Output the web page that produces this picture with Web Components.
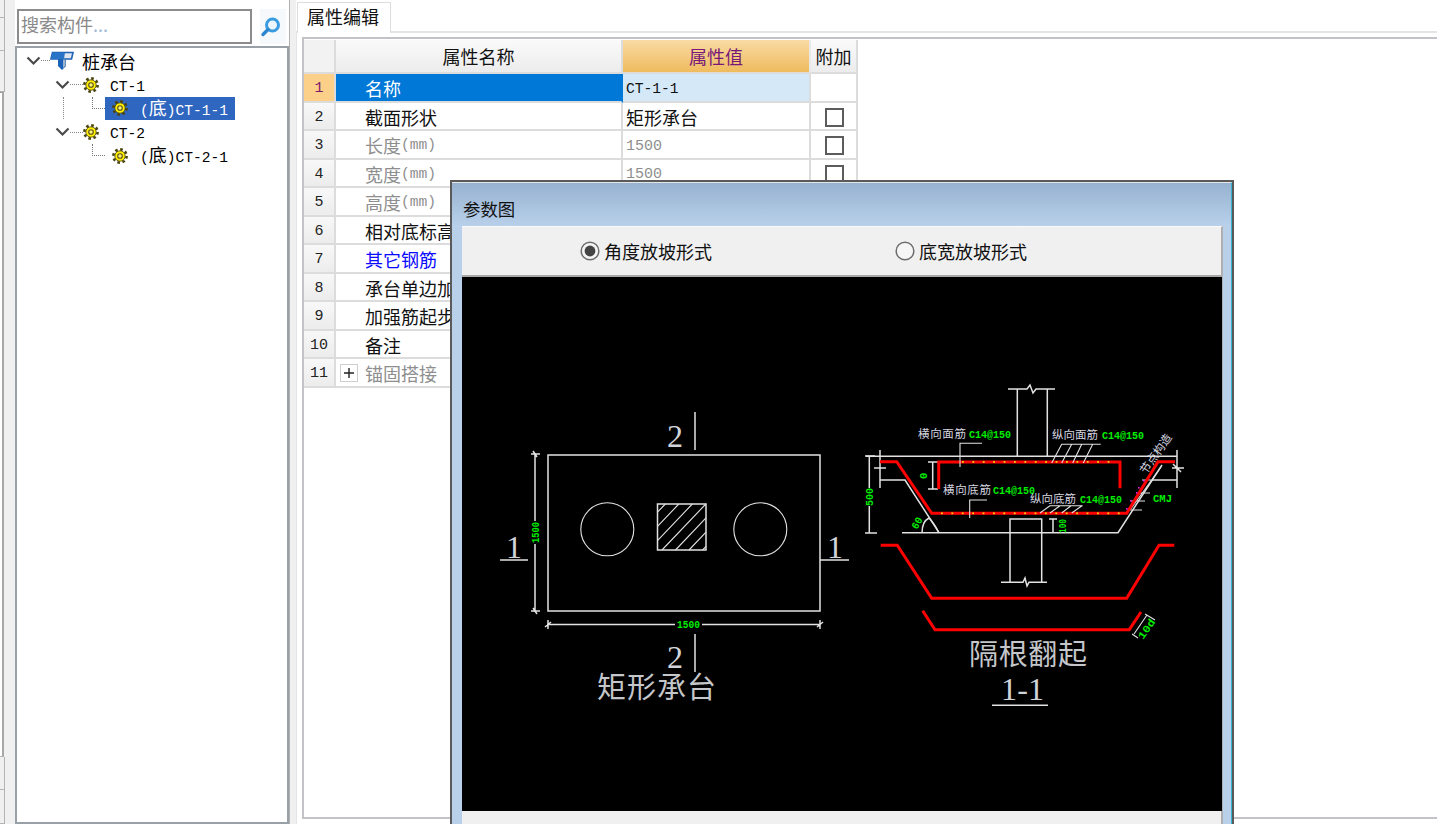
<!DOCTYPE html>
<html lang="zh">
<head>
<meta charset="utf-8">
<title>属性编辑</title>
<style>
  html, body { margin: 0; padding: 0; height: 100%; overflow: hidden; background: #f0f0f0; }
  body { font-family: "Noto Sans CJK SC", sans-serif; font-size: 18px; color: #000; }
</style>
</head>
<body>
<gt-app>
  <gt-rail slot="rail"></gt-rail>
  <gt-tree-panel slot="tree" placeholder="搜索构件...">
    <gt-tree-row level="0" icon="pile" label="桩承台"></gt-tree-row>
    <gt-tree-row level="1" icon="gear" label="CT-1"></gt-tree-row>
    <gt-tree-row level="2" icon="gear" label="(底)CT-1-1" selected guide></gt-tree-row>
    <gt-tree-row level="1" icon="gear" label="CT-2"></gt-tree-row>
    <gt-tree-row level="2" icon="gear" label="(底)CT-2-1"></gt-tree-row>
  </gt-tree-panel>
  <gt-prop-panel slot="props" tab="属性编辑"></gt-prop-panel>
  <gt-param-dialog slot="dialog" caption="参数图">
    <gt-radio checked label="角度放坡形式" slot="options"></gt-radio>
    <gt-radio label="底宽放坡形式" slot="options"></gt-radio>
    <gt-cad-drawing></gt-cad-drawing>
  </gt-param-dialog>
</gt-app>

<script>
const CJK = '"Noto Sans CJK SC", sans-serif';
const MONO = '"Liberation Mono", monospace';

// latin runs are narrower than the cjk ones, like the old simsun look
const mixed = (text) => text.replace(/[\x20-\x7e]+/g, (m) => `<span class="l">${m}</span>`);

const GEAR = `<svg width="16" height="16" viewBox="0 0 16 16">
  <circle cx="8" cy="8" r="6.6" fill="none" stroke="#4a4410" stroke-width="2.6" stroke-dasharray="2.6 2.58"/>
  <circle cx="8" cy="8" r="5.2" fill="#ffee00" stroke="#4a4410" stroke-width="0.8"/>
  <circle cx="8" cy="8" r="2.3" fill="#fff27a" stroke="#5a5418" stroke-width="1.1"/>
</svg>`;

const PILE = `<svg width="24" height="20" viewBox="0 0 24 20">
  <path d="M2.5 1.5 H23 L21.5 8 H1 Z" fill="#dfe6ee" stroke="#1c62b8" stroke-width="1.6"/>
  <path d="M2.5 1.5 H15 L14 8 H1 Z" fill="#2a74c8"/>
  <path d="M8 8 H16 V15 L12 19 L8 15 Z" fill="#1c62b8"/>
  <path d="M13 8.5 H15.5 V14.5 L13 17 Z" fill="#9db4cc"/>
</svg>`;

class GtApp extends HTMLElement {
  constructor() {
    super();
    this.attachShadow({ mode: 'open' }).innerHTML = `
      <style>
        :host {
          display: flex;
          position: relative;
          width: 1437px;
          height: 824px;
          overflow: hidden;
          background: #f0f0f0;
        }
        .gap { width: 10px; flex: none; }
        .gap2 { width: 6px; flex: none; }
      </style>
      <slot name="rail"></slot>
      <div class="gap"></div>
      <slot name="tree"></slot>
      <div class="gap2"></div>
      <slot name="props"></slot>
      <slot name="dialog"></slot>`;
  }
}

class GtRail extends HTMLElement {
  constructor() {
    super();
    this.attachShadow({ mode: 'open' }).innerHTML = `
      <style>
        :host { display: flex; flex-direction: column; width: 5px; flex: none; }
        div { box-sizing: border-box; border-right: 1px solid #b4b4b4; border-bottom: 1px solid #b4b4b4; background: #f0f0f0; }
        .w { flex: 1; background: #fff; width: 4px; border-right: 2px solid #a8a8a8; border-top: 1px solid #999; }
      </style>
      <div style="height:18px"></div>
      <div style="height:33px"></div>
      <div style="height:41px"></div>
      <div class="w"></div>
      <div style="height:33px"></div>
      <div style="height:34px"></div>`;
  }
}

class GtTreePanel extends HTMLElement {
  connectedCallback() {
    if (this.shadowRoot) return;
    this.attachShadow({ mode: 'open' }).innerHTML = `
      <style>
        :host {
          display: flex;
          flex-direction: column;
          width: 275px;
          flex: none;
          box-sizing: border-box;
          background: #fff;
          border-right: 1px solid #b0b0b0;
          font-family: ${CJK};
        }
        .search { display: flex; height: 46px; box-sizing: border-box; padding: 9px 4px 2px 2px; gap: 8px; }
        .input {
          flex: none;
          width: 235px;
          box-sizing: border-box;
          border: 2px solid #8c8c8c;
          padding-left: 2px;
          line-height: 26px;
          color: #8a8a8a;
          font-size: 18px;
          background: #fff;
        }
        .input b { font-weight: 400; color: #9db8d8; }
        .btn { flex: 1; display: flex; align-items: center; justify-content: center; background: #f6f9fc; padding-right: 4px; }
        .tree {
          flex: 1;
          box-sizing: border-box;
          border: 2px solid #9aa0a8;
          background: #fff;
          padding-top: 1px;
        }
      </style>
      <div class="search">
        <div class="input">搜索构件<b>...</b></div>
        <div class="btn">
          <svg width="22" height="22" viewBox="0 0 22 22">
            <circle cx="12.5" cy="9" r="6" fill="#eaf5fd" stroke="#3a9be0" stroke-width="3"/>
            <path d="M8 13.5 L3 18.5" stroke="#2f86d0" stroke-width="3.4" stroke-linecap="round"/>
          </svg>
        </div>
      </div>
      <div class="tree"><slot></slot></div>`;
  }
}

class GtTreeRow extends HTMLElement {
  connectedCallback() {
    if (this.shadowRoot) return;
    const level = +this.getAttribute('level');
    const icon = this.getAttribute('icon') === 'pile' ? PILE : GEAR;
    const label = mixed(this.getAttribute('label'));
    const chevron = `<svg class="chev" width="15" height="10" viewBox="0 0 15 10"><path d="M1.5 1.5 L7.5 7.5 L13.5 1.5" fill="none" stroke="#4a4a4a" stroke-width="2.2"/></svg>`;
    const lead = level < 2
      ? `${chevron}<i class="dots"></i>`
      : `<i class="elbow"></i>`;
    this.attachShadow({ mode: 'open' }).innerHTML = `
      <style>
        :host {
          display: flex;
          position: relative;
          align-items: center;
          height: 23.8px;
          white-space: nowrap;
          font-family: ${CJK};
          font-size: 18px;
          line-height: 24px;
        }
        :host([level="0"]) { padding-left: 9px; }
        :host([level="1"]) { padding-left: 38px; }
        :host([level="2"]) { padding-left: 75px; }
        :host([guide])::before {
          content: "";
          position: absolute;
          left: 46px;
          top: 0;
          height: 22px;
          border-left: 1px dotted #888;
        }
        .l { font-family: ${MONO}; font-size: 14.6px; }
        .chev { flex: none; }
        .dots { flex: none; width: 13px; border-top: 1px dotted #888; }
        :host([level="0"]) .dots { width: 9px; }
        .elbow {
          flex: none;
          align-self: flex-start;
          width: 13px;
          height: 12px;
          border-left: 1px dotted #777;
          border-bottom: 1px dotted #777;
          box-sizing: border-box;
        }
        .item { display: flex; align-items: center; height: 100%; }
        :host([level="0"]) .item { gap: 8px; }
        :host([level="1"]) .item { gap: 11px; }
        :host([level="2"]) .item { gap: 12px; padding: 0 7px; }
        :host([selected]) .item { background: #2f66c0; color: #fff; }
        svg { display: block; }
      </style>
      ${lead}<div class="item">${icon}<span>${label}</span></div>`;
  }
}

const ROWS = [
  { name: '名称', value: 'CT-1-1', nocheck: true, selected: true },
  { name: '截面形状', value: '矩形承台' },
  { name: '长度(mm)', value: '1500', muted: true },
  { name: '宽度(mm)', value: '1500', muted: true },
  { name: '高度(mm)', muted: true },
  { name: '相对底标高' },
  { name: '其它钢筋', link: true },
  { name: '承台单边加' },
  { name: '加强筋起步' },
  { name: '备注' },
  { name: '锚固搭接', muted: true, expand: true, nocheck: true },
];

class GtPropPanel extends HTMLElement {
  connectedCallback() {
    if (this.shadowRoot) return;
    const rows = ROWS.map((row, i) => `
      <div class="cell num ${row.selected ? 'cur' : ''}">${i + 1}</div>
      <div class="cell name ${row.selected ? 'sel' : ''} ${row.muted ? 'muted' : ''} ${row.link ? 'link' : ''}">
        ${row.expand ? '<span class="plus"><svg width="12" height="12" viewBox="0 0 12 12"><path d="M1 6 H11 M6 1 V11" stroke="#222" stroke-width="1.4"/></svg></span>' : ''}
        ${mixed(row.name)}
      </div>
      <div class="cell value ${row.selected ? 'active' : ''} ${row.muted ? 'muted num-v' : ''}">${row.value ? mixed(row.value) : ''}</div>
      <div class="cell extra">${row.nocheck ? '' : '<span class="box"></span>'}</div>`).join('');
    this.attachShadow({ mode: 'open' }).innerHTML = `
      <style>
        :host {
          display: flex;
          flex-direction: column;
          flex: 1;
          min-width: 0;
          font-family: ${CJK};
          font-size: 18px;
          background: #fff;
        }
        .tabs { display: flex; height: 33px; box-sizing: border-box; border-bottom: 2px solid #e4e4e4; background: #fff; flex: none; padding-left: 1px; }
        .tab {
          width: 94px;
          margin-top: 2px;
          margin-bottom: -2px;
          box-sizing: border-box;
          border: 1px solid #dcdcdc;
          border-bottom: 0;
          background: #fff;
          text-align: center;
          line-height: 27px;
          color: #111;
          padding-right: 2px;
        }
        .body { flex: 1; display: flex; min-height: 0; padding: 4px 0 5px 5px; border-left: 1px solid #e4e4e4; }
        .frame { flex: 1; box-sizing: border-box; border-top: 2px solid #c2c2c8; border-left: 2px solid #c2c2c8; border-bottom: 2px solid #c2c2c8; background: #fff; padding: 1px 0 0 0; }
        .grid {
          display: grid;
          grid-template-columns: 32px 287px 188px 47px;
          grid-template-rows: 34px repeat(11, 28.5px);
          width: max-content;
        }
        .cell {
          box-sizing: border-box;
          display: flex;
          align-items: center;
          padding-top: 2px;
          border-right: 2px solid #dcdcdc;
          border-bottom: 2px solid #dcdcdc;
          white-space: nowrap;
          overflow: hidden;
          line-height: 26px;
          color: #111;
        }
        .l { font-family: ${MONO}; font-size: 14.6px; }
        .head { padding-top: 0; justify-content: center; background: linear-gradient(#fafafa, #ececec); }
        .head.corner { background: #f2f2f2; }
        .head.on { background: linear-gradient(#f9dba4, #efbb5e); color: #78187a; border-right-color: #e8e8e8; }
        .num { padding-top: 4px; justify-content: center; background: linear-gradient(#f8f8f8, #ececec); font-family: ${MONO}; font-size: 15px; color: #222; }
        .num.cur { background: #fdd08a; color: #7a1a6a; }
        .name { padding-left: 29px; }
        .name.sel { background: #0078d7; color: #fff; border-right-color: #0078d7; }
        .value { padding-left: 3px; }
        .value.active { padding-top: 3px; background: #d5e8f8; }
        .value.num-v { padding-top: 5px; }
        .extra { justify-content: center; padding-top: 3px; padding-left: 1px; }
        .muted { color: #8e8e8e; }
        .num-v .l { font-size: 15px; }
        .link { color: #0a0aff; }
        .box { display: block; width: 19px; height: 19px; box-sizing: border-box; border: 2px solid #5c5c5c; background: #fff; }
        .plus {
          display: flex;
          align-items: center;
          justify-content: center;
          width: 18px;
          height: 18px;
          box-sizing: border-box;
          border: 1px solid #cfcfcf;
          margin: 0 7px 0 -25px;
          flex: none;
        }
      </style>
      <div class="tabs"><div class="tab">${this.getAttribute('tab')}</div></div>
      <div class="body">
        <div class="frame">
          <div class="grid">
            <div class="cell head corner"></div>
            <div class="cell head">属性名称</div>
            <div class="cell head on">属性值</div>
            <div class="cell head">附加</div>
            ${rows}
          </div>
        </div>
      </div>`;
  }
}

class GtParamDialog extends HTMLElement {
  connectedCallback() {
    if (this.shadowRoot) return;
    this.attachShadow({ mode: 'open' }).innerHTML = `
      <style>
        :host {
          position: absolute;
          left: 450px;
          top: 180px;
          width: 784px;
          height: 670px;
          box-sizing: border-box;
          display: flex;
          flex-direction: column;
          border: 2px solid #5a5a5a;
          border-width: 2px 2px 0 2px;
          background: #b8d0ea;
          font-family: ${CJK};
        }
        .edge { flex: 1; display: flex; flex-direction: column; border-top: 1px solid #e6e6e6; border-right: 1px solid #35b4d4; padding: 0 9px 0 10px; min-height: 0; }
        .title {
          flex: none;
          height: 43px;
          margin: 0 -9px 0 -10px;
          padding-left: 11px;
          background: linear-gradient(#97b2d0, #b8d0ea);
          font-size: 17.4px;
          line-height: 51px;
          color: #111;
        }
        .panel { flex: 1; display: flex; flex-direction: column; background: #f0f0f0; border-top: 1px solid #fafafa; border-right: 2px solid #b0b0b0; margin-right: -1px; min-height: 0; }
        .options { flex: none; display: flex; align-items: center; padding-left: 118px; gap: 183px; border-bottom: 2px solid #a8a8a8; height: 48px; }
        .canvas { flex: none; }
      </style>
      <div class="edge">
        <div class="title">${this.getAttribute('caption')}</div>
        <div class="panel">
          <div class="options"><slot name="options"></slot></div>
          <div class="canvas"><slot></slot></div>
        </div>
      </div>`;
  }
}

class GtRadio extends HTMLElement {
  connectedCallback() {
    if (this.shadowRoot) return;
    this.attachShadow({ mode: 'open' }).innerHTML = `
      <style>
        :host { display: inline-flex; align-items: center; gap: 4px; font-size: 18px; color: #111; font-family: ${CJK}; line-height: 24px; }
        svg { display: block; flex: none; }
      </style>
      <svg width="20" height="20" viewBox="0 0 20 20">
        <circle cx="10" cy="10" r="8.8" fill="#f6f6f6" stroke="#6e6e6e" stroke-width="1.5"/>
        ${this.hasAttribute('checked') ? '<circle cx="10" cy="10" r="5.4" fill="#444"/>' : ''}
      </svg>
      <span>${this.getAttribute('label')}</span>`;
  }
}

class GtCadDrawing extends HTMLElement {
  connectedCallback() {
    if (this.shadowRoot) return;
    // drawing coordinates are the page's own, the viewBox shifts them into the canvas
    const hatch = [];
    for (let d = -36; d < 48; d += 13.5) {
      const xb = 657.5 + d;
      const x0 = xb < 657.5 ? 657.5 : xb;
      const yb = xb < 657.5 ? 550 - (657.5 - xb) * 1.05 : 550;
      const xt = Math.min(706, xb + 46 / 1.05);
      const yt = 550 - (xt - xb) * 1.05;
      hatch.push(`M${x0} ${yb} L${xt} ${yt}`);
    }
    const dots = [];
    for (let x = 963; x < 1118; x += 10.4) dots.push(`<rect class="dot" x="${x - 1}" y="461" width="1.8" height="1.8"/>`);
    for (let x = 942; x < 1122; x += 10.4) dots.push(`<rect class="dot" x="${x - 1}" y="512.4" width="1.8" height="1.8"/>`);
    const magenta = [[1143, 480], [1138, 487], [1136, 492], [1130, 500], [1126, 508]]
      .map(([x, y]) => `<rect x="${x}" y="${y}" width="1.6" height="1.6" fill="#e020e0"/>`).join('');
    this.attachShadow({ mode: 'open' }).innerHTML = `
      <style>
        :host { display: block; width: 760px; height: 534px; background: #000; }
        svg { display: block; }
        path, circle, rect.o { fill: none; stroke: #e2e2e2; stroke-width: 1.5; }
        .thin { stroke-width: 1.1; }
        .red { stroke: #ff0000; stroke-width: 3; }
        .dot { fill: #f0d000; stroke: none; }
        .gap { fill: #000; stroke: none; }
        text { font-family: ${CJK}; }
        .big { font-family: "Liberation Serif", ${CJK}; font-size: 32px; fill: #d0d4da; }
        .cap { font-size: 29px; fill: #c4c6ca; }
        .g { font-family: ${MONO}; font-size: 10.5px; font-weight: 700; fill: #00ee00; }
        .lab { font-size: 11.5px; fill: #d6d6e0; }
      </style>
      <svg width="760" height="534" viewBox="462 277 760 534">
        <!-- plan -->
        <rect class="o" x="548" y="455" width="272" height="156"/>
        <circle cx="607.3" cy="529.3" r="26.5" class="thin"/>
        <circle cx="760.3" cy="529.3" r="26.5" class="thin"/>
        <rect class="o" x="657.5" y="504" width="48.5" height="46"/>
        <path class="thin" d="${hatch.join(' ')}"/>
        <path d="M695 412 V450 M695 634 V672 M500 560 H528 M820 560 H849"/>
        <text class="big" x="667" y="447">2</text>
        <text class="big" x="667" y="668">2</text>
        <text class="big" x="506" y="558">1</text>
        <text class="big" x="827" y="558">1</text>
        <path d="M535 453 V612 M531 454 H540 M531 611 H540 M533 451 L537 457 M533 608 L537 614"/>
        <path d="M547 624.5 H675 M702 624.5 H821 M548 620 V629 M820 620 V629 M545 627 L551 622 M817 627 L823 622"/>
        <rect class="gap" x="531" y="521" width="9" height="23"/>
        <text class="g" transform="translate(538.7 543) rotate(-90)" textLength="21" lengthAdjust="spacingAndGlyphs">1500</text>
        <text class="g" x="677" y="628" textLength="23" lengthAdjust="spacingAndGlyphs">1500</text>
        <text class="cap" x="597" y="698" textLength="119">矩形承台</text>

        <!-- section 1-1 -->
        <path d="M866 456.3 H1177 M1017.3 389 V456 M1047.3 389 V456 M1008 389 H1027 L1030 385 L1033 393 L1036 389 H1055"/>
        <path d="M880 450 V488 M880 480 H905 L939 532.7 M874 468 H886 M1177 450 V488 M1152 480 H1177 M1172 468 H1184 M1173 464 L1181 472"/>
        <path d="M902 532.7 H1118 L1162 465"/>
        <path d="M1010 582.3 V519 H1041.7 V582.3 M1001 582.3 H1023 L1025 578 L1027 586 L1029 582.3 H1047"/>
        <path d="M869.3 456 V533 M865 456 H875 M865 533 H877"/>
        <path d="M932.7 462 V489 M928 462 H938 M928 489 H938"/>
        <path d="M922 533 C922 525 925 520 929 518 C933 522 936 527 939 533"/>
        <path d="M1053 519 V533 M1049 519 H1057"/>
        <path class="thin" d="M1142 480 H1151 M1138 493 H1150 M1131 501 H1145 M1130 510 H1142 M1161 467 L1130 510"/>
        <path class="red" d="M880 461.7 H896.7 L931.7 513.3 H1126.7 L1158 461.7 H1175"/>
        <path class="red" d="M938.7 489 V462 H1120 V488.3"/>
        ${dots.join('')}
        ${magenta}
        <path class="thin" d="M960 467 V443.3 H982 M969.7 518 V500 H987"/>
        <path class="thin" d="M1061.7 444.3 H1100.7 M1061.7 444.3 L1051.7 463 M1071.7 444.3 L1061.7 463 M1081.7 444.3 L1072.7 463 M1092.7 444.3 L1083.3 463"/>
        <path class="thin" d="M1050 505.7 H1082.7 M1050 505.7 L1040 513 M1060 505.7 L1050 513 M1071 505.7 L1061.7 513 M1082 505.7 L1071.7 513"/>
        <text class="lab" x="918" y="438" textLength="48">横向面筋</text>
        <text class="g" x="969" y="438" textLength="42" lengthAdjust="spacingAndGlyphs">C14@150</text>
        <text class="lab" x="943" y="494" textLength="48">横向底筋</text>
        <text class="g" x="993" y="494" textLength="42" lengthAdjust="spacingAndGlyphs">C14@150</text>
        <text class="lab" x="1052" y="439" textLength="46">纵向面筋</text>
        <text class="g" x="1102" y="439" textLength="42" lengthAdjust="spacingAndGlyphs">C14@150</text>
        <text class="lab" x="1030" y="503" textLength="46">纵向底筋</text>
        <text class="g" x="1080" y="503" textLength="42" lengthAdjust="spacingAndGlyphs">C14@150</text>
        <text class="lab" transform="translate(1146 475) rotate(-55)" textLength="46">节点构造</text>
        <text class="g" x="1153" y="502" textLength="19" lengthAdjust="spacingAndGlyphs">CMJ</text>
        <rect class="gap" x="865" y="488" width="9" height="18"/>
        <text class="g" transform="translate(873 506) rotate(-90)" textLength="18" lengthAdjust="spacingAndGlyphs">500</text>
        <text class="g" transform="translate(926.5 479) rotate(-90)">0</text>
        <text class="g" transform="translate(917 530) rotate(-60)" textLength="12" lengthAdjust="spacingAndGlyphs">60</text>
        <text class="g" transform="translate(1065.5 533) rotate(-90)" textLength="14" lengthAdjust="spacingAndGlyphs">100</text>

        <path class="red" d="M880.7 545.3 H897.3 L931.7 598.3 H1126.7 L1159 545.3 H1174.3"/>
        <path class="red" d="M922.7 610.7 L935 629.7 H1129.3 L1141 612"/>
        <path class="thin" d="M1147 615 L1134 634 M1145 614 L1155 620 M1132 634 L1138 638"/>
        <text class="g" transform="translate(1143 640) rotate(-55)" textLength="22" lengthAdjust="spacingAndGlyphs">10d</text>
        <text class="cap" x="969" y="665" textLength="118">隔根翻起</text>
        <text class="big" x="1001" y="700" textLength="43">1-1</text>
        <path d="M992 705.3 H1048"/>
      </svg>`;
  }
}

customElements.define('gt-app', GtApp);
customElements.define('gt-rail', GtRail);
customElements.define('gt-tree-panel', GtTreePanel);
customElements.define('gt-tree-row', GtTreeRow);
customElements.define('gt-prop-panel', GtPropPanel);
customElements.define('gt-param-dialog', GtParamDialog);
customElements.define('gt-radio', GtRadio);
customElements.define('gt-cad-drawing', GtCadDrawing);
</script>
</body>
</html>
